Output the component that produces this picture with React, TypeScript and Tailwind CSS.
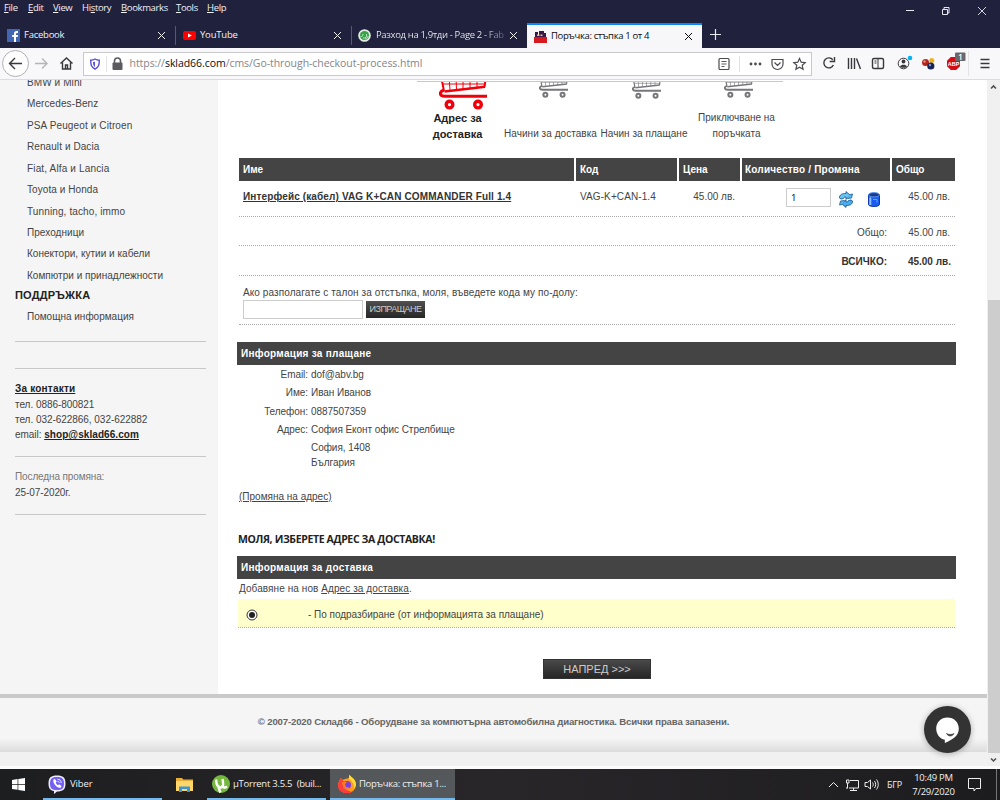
import type { ReactNode } from "react";

const sidebarLinks = [
  { label: "BMW и Mini", track: "tracking-[0.1px]" },
  { label: "Mercedes-Benz", track: "tracking-[0.1px]" },
  { label: "PSA Peugeot и Citroen", track: "tracking-[0.12px]" },
  { label: "Renault и Dacia", track: "tracking-[0.08px]" },
  { label: "Fiat, Alfa и Lancia", track: "tracking-[0.15px]" },
  { label: "Toyota и Honda", track: "tracking-[0.07px]" },
  { label: "Tunning, tacho, immo", track: "tracking-[0.12px]" },
  { label: "Преходници", track: "tracking-[0.05px]" },
  { label: "Конектори, кутии и кабели", track: "tracking-[0.02px]" },
  { label: "Компютри и принадлежности", track: "tracking-[0.02px]" },
];

const menuItems = [
  { first: "F", rest: "ile", width: "w-[24px]" },
  { first: "E", rest: "dit", width: "w-[25px]" },
  { first: "V", rest: "iew", width: "w-[29px]" },
  { first: "", rest: "History", width: "w-[39px]" },
  { first: "B", rest: "ookmarks", width: "w-[55px]" },
  { first: "T", rest: "ools", width: "w-[31px]" },
  { first: "H", rest: "elp", width: "w-[26px]" },
];

function Cross({ className }: { className: string }) {
  return (
    <svg className={className} viewBox="0 0 9 9" fill="none" stroke="currentColor">
      <path d="M1 1l7 7M8 1l-7 7" />
    </svg>
  );
}

function Cart({ className }: { className: string }) {
  return (
    <svg className={className} viewBox="0 0 48 48" fill="none" stroke="currentColor">
      <path d="M2 14L5 29M47 14L45.500 25" strokeWidth="2" />
      <path d="M46 24.800L5.500 29.500" strokeWidth="2.600" />
      <path d="M3 17H46M4 22H46M10 14l1 14M17 14l.5 14M24 14v13M31 14v13M38 14v12" strokeWidth="1" />
      <path d="M5 28C-.5 30 .5 34.300 6 34.300H48" strokeWidth="3" />
      <circle cx="10.500" cy="42.600" r="3.300" strokeWidth="3.400" />
      <circle cx="39" cy="42.600" r="3.300" strokeWidth="3.400" />
    </svg>
  );
}

function TitleBar() {
  return (
    <div className="flex h-[23px] shrink-0 items-start text-[9.5px] leading-[16px] text-[#f0f0f5]">
      <div className="flex pl-[4px] tracking-[-0.35px]">
        {menuItems.map((m) => (
          <span key={m.rest} className={m.width + " whitespace-nowrap"}>
            {m.first ? <span className="underline">{m.first}</span> : null}
            {m.first ? m.rest : (
              <>
                Hi<span className="underline">s</span>tory
              </>
            )}
          </span>
        ))}
      </div>
      <svg className="ml-auto mt-[5px] mr-[13px] h-[12px] w-[82px]" viewBox="0 0 82 12" fill="none" stroke="#e8e8f0">
        <path d="M1 5.5h8" />
        <path d="M37.500 4.500h5v5h-5zM39 4V2.500h5v5.500h-1.500" />
        <path d="M73 2l8 8M81 2l-8 8" strokeWidth="0.900" />
      </svg>
    </div>
  );
}

function Tabs() {
  return (
    <div className="flex h-[25px] shrink-0 items-stretch text-[9.5px] text-[#f3f3f7]">
      <div className="flex w-[175px] items-center pl-[7px]">
        <svg className="h-[13px] w-[13px] shrink-0" viewBox="0 0 13 13">
          <rect width="13" height="13" fill="#4267b2" />
          <path d="M7 13V8H5.200V6H7V4.500C7 2.900 8 2 9.500 2H11V4H10C9.300 4 9 4.300 9 4.900V6h2l-.3 2H9v5z" fill="#fff" />
        </svg>
        <span className="ml-[4px] tracking-[-0.25px]">Facebook</span>
        <Cross className="ml-auto mr-[9px] h-[9px] w-[9px]" />
      </div>
      <div className="my-[3px] w-px bg-[#56577a]" />
      <div className="flex w-[175px] items-center pl-[7px]">
        <svg className="h-[9px] w-[13px] shrink-0" viewBox="0 0 13 9">
          <rect width="13" height="9" rx="2" fill="#f00" />
          <path d="M5 2.500l4 2-4 2z" fill="#fff" />
        </svg>
        <span className="ml-[4px] tracking-[-0.2px]">YouTube</span>
        <Cross className="ml-auto mr-[9px] h-[9px] w-[9px]" />
      </div>
      <div className="my-[3px] w-px bg-[#56577a]" />
      <div className="flex w-[175px] items-center pl-[6px]">
        <svg className="h-[13px] w-[13px] shrink-0" viewBox="0 0 13 13">
          <circle cx="6.500" cy="6.500" r="6.300" fill="#e6ece6" />
          <circle cx="6.500" cy="6.500" r="4.600" fill="#37a447" />
          <path d="M2.500 7.500C4 8 5 7 5 5M5 9c3 .5 4-1 3.500-4M7 10c2-.5 3-1.500 3.200-3" stroke="#dcefdc" strokeWidth="0.800" fill="none" />
        </svg>
        <span className="ml-[5px] w-[129px] bg-linear-to-r from-[#f3f3f7] from-82% to-[#55567a] bg-clip-text tracking-[-0.35px] whitespace-nowrap text-transparent">
          Разход на 1,9тди - Page 2 - Fab
        </span>
        <Cross className="ml-[4px] mr-[9px] h-[9px] w-[9px] shrink-0" />
      </div>
      <div className="flex w-[175px] items-center border-t-2 border-[#0a84ff] bg-[#f7f7fa] pl-[7px] text-[#0c0c0d]">
        <svg className="h-[13px] w-[13px] shrink-0" viewBox="0 0 13 13">
          <path d="M1 2h3v3h1V1h5v2h2v4H1z" fill="#3c1747" />
          <path d="M0 7h13v6H0z" fill="#d71920" />
          <path d="M3 4.500h2.500v1.500H3zM6.500 4.500h2v1.500h-2z" fill="#dcd36b" />
        </svg>
        <span className="ml-[4px] tracking-[-0.36px] whitespace-nowrap">Поръчка: стъпка 1 от 4</span>
        <Cross className="ml-auto mr-[9px] h-[9px] w-[9px]" />
      </div>
      <svg className="ml-[8px] mt-[6px] h-[11px] w-[11px]" viewBox="0 0 11 11" stroke="#e8e8f0" strokeWidth="1.200">
        <path d="M5.500 0v11M0 5.500h11" />
      </svg>
    </div>
  );
}

function Toolbar() {
  return (
    <div className="flex h-[32px] shrink-0 items-center border-b border-[#dcdcde] bg-[#f8f8fa]">
      <svg className="h-[31px] w-[82px] shrink-0" viewBox="0 0 82 31" fill="none" stroke="#38383d" strokeWidth="1.400">
        <circle cx="15.500" cy="15.500" r="13" fill="#fdfdfe" stroke="#b1b1b3" strokeWidth="1" />
        <path d="M22 15.500H10M15 10l-5.500 5.500L15 21" />
        <path d="M35 15.500h12M42 10.500l5 5-5 5" stroke="#b5b5b8" />
        <path d="M60.500 15.500l6-5.500 6 5.500M62.500 14.500v6.500h8v-6.500M65.500 21v-4h2v4" />
      </svg>
      <div className="ml-[0.500px] flex h-[24px] w-[729px] shrink-0 items-center border border-[#c9c9cc] bg-white">
        <svg className="h-[22px] w-[44px] shrink-0" viewBox="0 0 44 22" fill="none">
          <path d="M11 6c-1.500 1-2.700 1.200-4.300 1.200 0 5 .7 7 4.300 9 3.600-2 4.300-4 4.300-9C13.700 7.200 12.500 7 11 6z" stroke="#5a4fdb" strokeWidth="1.400" />
          <path d="M11 8.500v5.500c-1.500-1-2-2.400-2-5 .8 0 1.300-.1 2-.5z" fill="#5a4fdb" />
          <path d="M22.500 3v16" stroke="#e3e3e6" />
          <rect x="28.500" y="9.500" width="10" height="7.500" rx="1" fill="#5b5b5f" />
          <path d="M30.500 10V8a3 3 0 0 1 6 0v2" stroke="#5b5b5f" strokeWidth="1.600" />
        </svg>
        <span className="ml-[2px] text-[10.500px] tracking-[-0.05px] whitespace-nowrap text-[#85858a]">
          https://<span className="text-[#0c0c0d]">sklad66.com</span>/cms/Go-through-checkout-process.html
        </span>
        <svg className="ml-auto h-[22px] w-[94px] shrink-0" viewBox="0 0 94 22" fill="none" stroke="#4a4a4f" strokeWidth="1.200">
          <rect x="2" y="5.500" width="10" height="11" rx="1" />
          <path d="M4.500 8.500h5M4.500 11h5M4.500 13.500h3" strokeWidth="0.900" />
          <path d="M22.500 3v16" stroke="#e3e3e6" />
          <g fill="#4a4a4f" stroke="none">
            <circle cx="34" cy="11" r="1.400" />
            <circle cx="38.500" cy="11" r="1.400" />
            <circle cx="43" cy="11" r="1.400" />
          </g>
          <path d="M55 6.500h11v4.500a5.500 5.500 0 0 1-11 0zM57.500 9.500l3 3 3-3" />
          <path d="M82.500 5.500l1.700 3.700 4 .4-3 2.700.9 4-3.600-2.100-3.600 2.100.9-4-3-2.700 4-.4z" />
        </svg>
      </div>
      <svg className="h-[31px] w-[188px] shrink-0" viewBox="0 0 188 31" fill="none" stroke="#38383d" strokeWidth="1.400">
        <path d="M20.800 11.800a5 5 0 1 0 .6 5.200M22.500 9v4.500h-4.800" />
        <path d="M36.500 10v11M39.500 10v11M42.500 10v11M44.500 10.500l4 10.500" />
        <rect x="60.500" y="10.500" width="11" height="10" rx="1.500" />
        <path d="M66 10.500v10M62.500 13h2M62.500 15h2" strokeWidth="1" />
        <circle cx="91.500" cy="15.500" r="5.300" strokeWidth="1" />
        <circle cx="91.500" cy="13.500" r="1.900" fill="#38383d" stroke="none" />
        <path d="M88 18.500c1-2.500 6-2.500 7 0l-1.500 1.300h-4z" fill="#38383d" stroke="none" />
        <circle cx="98" cy="10" r="2.300" fill="#00b3f4" stroke="none" />
        <g stroke="none">
          <circle cx="113.500" cy="14.500" r="3.500" fill="#b3261c" />
          <circle cx="119.800" cy="12.500" r="2.500" fill="#e8b423" />
          <circle cx="118.800" cy="18" r="3.600" fill="#172554" />
          <circle cx="112.500" cy="13.500" r="1.200" fill="#e98d85" />
          <circle cx="118" cy="17" r="1.200" fill="#7d91d8" />
          <path d="M138.800 9h5.400l3.800 3.800v5.400l-3.800 3.800h-5.400l-3.800-3.800v-5.400z" fill="#d40d12" />
          <rect x="143" y="4.500" width="10.500" height="8.500" rx="1" fill="#69696d" />
          <text x="135.800" y="17.800" fontSize="5.500" fontWeight="700" fill="#fff" fontFamily="Liberation Sans">ABP</text>
          <text x="146" y="11.800" fontSize="8.500" fontWeight="600" fill="#fff" fontFamily="Open Sans">1</text>
        </g>
        <path d="M156.500 3v25" stroke="#e3e3e6" strokeWidth="1" />
        <path d="M168.500 11.500h9M168.500 15.500h9M168.500 19.500h9" />
      </svg>
    </div>
  );
}

function Sidebar() {
  return (
    <aside className="flex w-[218px] shrink-0 flex-col overflow-hidden bg-[#f5f5f5] pl-[15px] text-[#444]">
      <ul className="mt-[-8px] pl-[12px]">
        {sidebarLinks.map((l) => (
          <li key={l.label} className={l.track + " h-[21.430px] leading-[21px] whitespace-nowrap"}>
            {l.label}
          </li>
        ))}
      </ul>
      <div className="h-[20px] text-[11px] leading-[19px] font-bold tracking-[0.2px] text-[#222]">ПОДДРЪЖКА</div>
      <div className="h-[21px] pl-[12px] leading-[21px]">Помощна информация</div>
      <div className="mt-[14px] h-[28px] w-[191px] border-y border-[#c8c8c8]" />
      <div className="mt-[12px] leading-[15.300px] tracking-[-0.04px]">
        <div className="font-bold tracking-[0.2px] text-[#222] underline">За контакти</div>
        <div>тел. 0886-800821</div>
        <div>тел. 032-622866, 032-622882</div>
        <div>
          email: <span className="font-bold tracking-[0.07px] text-[#222] underline">shop@sklad66.com</span>
        </div>
      </div>
      <div className="mt-[14px] flex h-[59px] w-[191px] flex-col border-y border-[#c8c8c8] pt-[12px] leading-[15.500px]">
        <div className="tracking-[-0.12px] text-[#777]">Последна промяна:</div>
        <div className="tracking-[-0.08px]">25-07-2020г.</div>
      </div>
    </aside>
  );
}

function Steps() {
  return (
    <div className="ml-[199px] flex h-[62px] w-[366px] border-t border-[#c8c8c8] leading-[15.500px] whitespace-nowrap">
      <div className="flex w-[81px] shrink-0 flex-col items-center text-center">
        <div className="flex h-[28px] w-[59px] items-end justify-end overflow-hidden">
          <Cart className="h-[48px] w-[48px] shrink-0 text-[#f0000a]" />
        </div>
        <div className="mt-[1px] text-[11px] font-bold text-[#222]">
          Адрес за
          <br />
          доставка
        </div>
      </div>
      <div className="flex w-[105px] shrink-0 flex-col items-center">
        <div className="ml-[5px] flex h-[16px] items-end overflow-hidden">
          <Cart className="h-[29px] w-[29px] shrink-0 text-[#77777a]" />
        </div>
        <div className="mt-[28px] tracking-[0.05px]">Начини за доставка</div>
      </div>
      <div className="flex w-[82px] shrink-0 flex-col items-center">
        <div className="ml-[4px] flex h-[17px] items-end overflow-hidden">
          <Cart className="h-[29px] w-[29px] shrink-0 text-[#77777a]" />
        </div>
        <div className="mt-[27px] tracking-[0.05px]">Начин за плащане</div>
      </div>
      <div className="flex w-[98px] shrink-0 flex-col items-center pl-[5px] text-center">
        <div className="ml-[3px] flex h-[16px] items-end overflow-hidden">
          <Cart className="h-[29px] w-[29px] shrink-0 text-[#77777a]" />
        </div>
        <div className="mt-[12px]">
          Приключване на
          <br />
          поръчката
        </div>
      </div>
    </div>
  );
}

const columns = "grid grid-cols-[335px_101px_61px_148px_63px] gap-x-[2px]";
const dots = "border-b border-dotted border-[#aaa]";

function OrderTable() {
  return (
    <div className="ml-[21px] w-[716px]">
      <div className={columns + " h-[23px] leading-[23px] font-bold text-white"}>
        <div className="bg-[#444] pl-[4px]">Име</div>
        <div className="bg-[#444] pl-[4px]">Код</div>
        <div className="bg-[#444] pl-[4px]">Цена</div>
        <div className="bg-[#444] pl-[3px] tracking-[0.2px]">Количество / Промяна</div>
        <div className="bg-[#444] pl-[4px]">Общо</div>
      </div>
      <div className={columns + " h-[36px] leading-[31px]"}>
        <div className={dots + " pl-[4px] font-bold tracking-[0.130px] text-[#333] underline"}>Интерфейс (кабел) VAG K+CAN COMMANDER Full 1.4</div>
        <div className={dots + " pl-[4px] tracking-[0.1px]"}>VAG-K+CAN-1.4</div>
        <div className={dots + " pr-[5px] text-right"}>45.00 лв.</div>
        <div className={dots + " flex pt-[7px] pl-[44px]"}>
          <div className="h-[19px] w-[45px] border border-[#ccc] bg-white pl-[4px] font-['Open_Sans',sans-serif] text-[9.500px] leading-[18px] text-black">1</div>
          <svg className="ml-[7px] mt-[3px] h-[17px] w-[16px]" viewBox="0 0 16 17">
            <path d="M1.500 7C1.500 3.500 4 2.500 8 2.500V.6l4.500 3.900L8 8.200V6C6 6 5.500 6.500 5.500 7.500L3 8z" fill="#6cc4f3" stroke="#155a99" strokeWidth="0.900" />
            <path d="M14.500 10c0 3.500-2.500 4.500-6.500 4.500v1.900L3.500 12.500 8 8.800V11c2 0 2.500-.5 2.500-1.500L13 9z" fill="#4aaef0" stroke="#155a99" strokeWidth="0.900" />
            <path d="M12 3.500l2.500-.5-1 4-4 .5M4 13.500L1.500 14l1-4 4-.5" fill="#58b9ef" stroke="#155a99" strokeWidth="0.800" />
          </svg>
          <svg className="ml-[14px] mt-[4px] h-[15px] w-[12px]" viewBox="0 0 12 15">
            <path d="M.5 3v9.500c0 2.600 11 2.600 11 0V3z" fill="#1a5cf0" stroke="#1037ac" />
            <path d="M2.300 5.500v7.500" stroke="#8cc0ff" strokeWidth="2" />
            <ellipse cx="6" cy="2.800" rx="5.500" ry="2.200" fill="#1e3a8a" stroke="#5598f5" />
            <path d="M5 7.500h4v3" fill="none" stroke="#54a8ff" />
          </svg>
        </div>
        <div className={dots + " pr-[5px] text-right"}>45.00 лв.</div>
      </div>
      <div className="grid h-[29px] grid-cols-[651px_63px] grid-rows-[29px] gap-x-[2px] text-right leading-[31px]">
        <div className={dots + " pr-[3px]"}>Общо:</div>
        <div className={dots + " pr-[5px]"}>45.00 лв.</div>
      </div>
      <div className="grid h-[30px] grid-cols-[651px_63px] grid-rows-[30px] gap-x-[2px] text-right leading-[32px] font-bold text-[#333]">
        <div className={dots + " pr-[3px]"}>ВСИЧКО:</div>
        <div className={dots + " pr-[4px]"}>45.00 лв.</div>
      </div>
      <div className={dots + " h-[49px] pt-[9px] pl-[4px]"}>
        <div className="h-[15px] leading-[16px] tracking-[0.090px]">Ако разполагате с талон за отстъпка, моля, въведете кода му по-долу:</div>
        <div className="flex items-center">
          <div className="h-[19px] w-[120px] border border-[#ccc] bg-white" />
          <div className="ml-[3px] h-[17px] w-[59px] bg-linear-to-b from-[#505050] to-[#262626] text-center text-[9px] leading-[17px] tracking-[-0.55px] text-[#ccc]">
            ИЗПРАЩАНЕ
          </div>
        </div>
      </div>
    </div>
  );
}

function SectionBar({ children }: { children: ReactNode }) {
  return <div className="ml-[19px] h-[23px] w-[719px] bg-[#444] pl-[4px] leading-[23px] font-bold tracking-[0.280px] text-white">{children}</div>;
}

function InfoRow({ label, value }: { label: string; value: string }) {
  return (
    <div className="flex h-[18.300px] leading-[18px]">
      <div className="w-[90px] shrink-0 text-right tracking-[-0.05px]">{label}</div>
      <div className="pl-[3px] tracking-[-0.05px]">{value}</div>
    </div>
  );
}

function Checkout() {
  return (
    <main className="flex min-w-0 flex-1 flex-col overflow-hidden bg-white pt-[1px] text-[#444]">
      <Steps />
      <div className="mt-[15px]">
        <OrderTable />
      </div>
      <div className="mt-[17px]">
        <SectionBar>Информация за плащане</SectionBar>
      </div>
      <div className="h-[105px] pt-[1px]">
        <InfoRow label="Email:" value="dof@abv.bg" />
        <InfoRow label="Име:" value="Иван Иванов" />
        <InfoRow label="Телефон:" value="0887507359" />
        <InfoRow label="Адрес:" value="София Еконт офис Стрелбище" />
        <InfoRow label="" value="София, 1408" />
        <div className="mt-[-3px]">
          <InfoRow label="" value="България" />
        </div>
      </div>
      <div className="mt-[18px] h-[18px] pl-[21px] leading-[18px]">
        <span className="underline">(Промяна на адрес)</span>
      </div>
      <div className="mt-[24px] h-[18px] pl-[20px] font-['Open_Sans','Noto_Sans',sans-serif] text-[10.500px] leading-[18px] font-bold tracking-[-0.360px] text-[#222]">
        МОЛЯ, ИЗБЕРЕТЕ АДРЕС ЗА ДОСТАВКА!
      </div>
      <div className="mt-[8px]">
        <SectionBar>Информация за доставка</SectionBar>
      </div>
      <div className="h-[20px] pl-[21px] leading-[20px] tracking-[0.080px]">
        Добавяне на нов <span className="underline">Адрес за доставка</span>.
      </div>
      <div className={dots + " ml-[20px] flex h-[29px] w-[717px] items-center bg-[#ffffcc]"}>
        <svg className="ml-[8px] mt-[3px] h-[12px] w-[12px]" viewBox="0 0 12 12">
          <circle cx="6" cy="6" r="5" fill="#fff" stroke="#333" />
          <circle cx="6" cy="6" r="3" fill="#222" />
        </svg>
        <span className="mt-[2px] ml-[50px] tracking-[-0.02px]">- По подразбиране (от информацията за плащане)</span>
      </div>
      <div className="mt-[31px] ml-[325px] h-[20px] w-[108px] border border-[#333] bg-linear-to-b from-[#4a4a4a] to-[#262626] text-center text-[11px] leading-[19px] text-[#ccc]">
        НАПРЕД &gt;&gt;&gt;
      </div>
    </main>
  );
}

function Footer() {
  return (
    <footer className="h-[72px] shrink-0 bg-[#f1f1f1]">
      <div className="h-[58px] border-t-4 border-[#c9c9c9] bg-linear-to-b from-[#f5f5f5] from-75% to-[#dcdcdc] text-center leading-[47px] font-bold text-[#666]">
        <span className="text-[9.600px] tracking-[-0.165px]">© 2007-2020 Склад66 - Оборудване за компютърна автомобилна диагностика. Всички права запазени.</span>
      </div>
    </footer>
  );
}

function Scrollbar() {
  return (
    <div className="flex w-[13px] shrink-0 flex-col items-center bg-[#f0f0f0]">
      <svg className="h-[13px] w-[11px]" viewBox="0 0 11 13" fill="none" stroke="#505050" strokeWidth="1.600">
        <path d="M3 8.500l2.500-2.500L8 8.500" />
      </svg>
      <div className="mt-[207px] h-[455px] w-[12px] bg-[#cdcdcd]" />
      <svg className="h-[13px] w-[11px]" viewBox="0 0 11 13" fill="none" stroke="#505050" strokeWidth="1.600">
        <path d="M3 5.500L5.500 8 8 5.500" />
      </svg>
    </div>
  );
}

function ChatButton() {
  return (
    <button className="absolute top-[626px] left-[924px] h-[47px] w-[47px] rounded-full bg-[#333] shadow-[0_1px_6px_rgba(0,0,0,0.3)]">
      <svg className="h-[47px] w-[47px]" viewBox="0 0 47 47">
        <path d="M23.500 11.500c6.500 0 11.300 4.900 11.300 11 0 7.500-6 11-14 14.500v-3.200c-5-1-8.600-5.600-8.600-11.300 0-6.100 4.800-11 11.300-11z" fill="#fff" />
        <path d="M22.500 27.500c2 1.300 5.500 1.300 7.500 0-1.500 3.300-6 3.300-7.500 0z" fill="#333" stroke="#333" strokeWidth="0.600" />
      </svg>
    </button>
  );
}

function Taskbar() {
  return (
    <div className="flex h-[31px] shrink-0 bg-linear-to-r from-[#1d1e20] via-[#29262a] to-[#1c1c1e] text-[9.500px] text-[#f0f0f0]">
      <div className="flex w-[43px] items-center pl-[12px]">
        <svg className="h-[13px] w-[13px]" viewBox="0 0 13 13" fill="#fff">
          <path d="M0 1.900L5.600 1.100v5H0zM6.300 1L13 0v6.100H6.300zM0 6.800h5.600v5L0 11.100zM6.300 6.800H13V13l-6.700-1z" />
        </svg>
      </div>
      <div className="flex w-[119px] items-center border-b-2 border-[#76b9ed] pt-[1px] pl-[5px]">
        <svg className="h-[19px] w-[18px]" viewBox="0 0 18 19">
          <path d="M9 .5c6 0 8.500 2 8.500 8s-2.500 8-8.500 8L6 19v-3C2 15.500.5 13 .5 8.500.5 2.500 3 .5 9 .5z" fill="#f1edff" />
          <path d="M9 2c5 0 7 1.500 7 6.500S14 15 9 15s-7-1.500-7-6.500S4 2 9 2z" fill="#7360f2" />
          <path d="M5.500 4.500l1.500-.5 1.700 2.500-1 1.200c.5 1.200 1.300 2 2.300 2.500l1.200-1 2.300 1.700-.5 1.500c-3 2-9-4.500-7.500-7.900z" fill="#fff" />
          <path d="M9.500 4.200c2.200 0 3.700 1.600 3.700 3.800M9.500 6.200c1 0 1.700.7 1.700 1.700" fill="none" stroke="#fff" strokeWidth="0.800" />
        </svg>
        <span className="ml-[4px] tracking-[-0.1px]">Viber</span>
      </div>
      <div className="flex w-[45px] items-center pl-[14px]">
        <svg className="h-[15px] w-[17px]" viewBox="0 0 17 15">
          <path d="M0 1h6l1.500 1.500H17V14H0z" fill="#e9ae3a" />
          <path d="M0 4h17v10H0z" fill="#ffd667" />
          <path d="M3 15V9.500h11V15h-3v-3H6v3z" fill="#3e96d1" />
        </svg>
      </div>
      <div className="flex w-[119px] items-center border-b-2 border-[#76b9ed] pt-[1px] pl-[5px]">
        <svg className="h-[18px] w-[18px] shrink-0" viewBox="0 0 18 18">
          <circle cx="9" cy="9" r="9" fill="#76b83f" />
          <path d="M4 4.500C4.500 9 5 13 9 12.500c2.500-.3 2.500-3 1.500-8.500M10 10c1 3 3 3.200 5 1.500M6 10c1 3 1 5 2.500 7.500" stroke="#fff" strokeWidth="2.400" fill="none" />
        </svg>
        <span className="ml-[3px] tracking-[-0.26px] whitespace-pre">µTorrent 3.5.5  (buil...</span>
      </div>
      <div className="ml-[4px] flex w-[125px] items-center border-b-2 border-[#76b9ed] bg-[#55585a] pt-[1px] pl-[8px]">
        <svg className="h-[18px] w-[18px] shrink-0" viewBox="0 0 18 18">
          <path d="M1 6l2-3 1 2 3-1 4-1V0c4 3 7 5 7 10a9 8 0 0 1-18 0z" fill="#ff9a1f" />
          <path d="M1 6l2-3 1 2 3 2-2 6 6 3 3 1A9 8 0 0 1 0 10z" fill="#ff3d3d" />
          <path d="M11 0c4 3 7 5 7 10l-2 4c0-5-1-7-5-10z" fill="#ffda3b" />
          <circle cx="9" cy="10" r="4" fill="#7b40d8" />
          <path d="M4 7h5l-2 2 1 3 5 1c-4 3-9 0-9-6z" fill="#ff7a29" />
        </svg>
        <span className="ml-[3px] tracking-[-0.3px] whitespace-nowrap">Поръчка: стъпка 1...</span>
      </div>
      <svg className="ml-auto h-[31px] w-[52px] shrink-0" viewBox="0 0 52 31" fill="none" stroke="#eee" strokeWidth="1">
        <path d="M2 18l4.500-4.500L11 18" />
        <path d="M23 11.500h8.500v7.500H22M19 19h2M26.500 19v2.500M23 21.500h7M19.500 11h2.500v3h-2.500zM20.500 14v5" />
        <path d="M38 13.500h2.500l3-2.500v9l-3-2.500H38zM45.500 13.500c1 1.200 1 2.800 0 4M47.500 12c1.600 2 1.600 5 0 7M49.500 10.500c2.300 2.800 2.300 7.200 0 10" />
      </svg>
      <span className="ml-[8px] w-[17px] text-[9px] leading-[31px] tracking-[-0.2px]">БГР</span>
      <div className="ml-[6px] w-[47px] pt-[2px] text-center text-[9.500px] leading-[13.500px] tracking-[-0.300px] whitespace-nowrap">
        10:49 PM
        <br />
        7/29/2020
      </div>
      <svg className="ml-[9px] h-[31px] w-[34px] shrink-0" viewBox="0 0 34 31" fill="none" stroke="#eee">
        <path d="M2.500 9.500h12v10H10l-2 2.500v-2.500H2.500z" />
        <path d="M30.500 0v31" stroke="#77777b" />
      </svg>
    </div>
  );
}

export default function App() {
  return (
    <div className="flex h-[800px] w-[1000px] flex-col overflow-hidden bg-[#20213d] font-['Open_Sans','Noto_Sans',sans-serif]">
      <TitleBar />
      <Tabs />
      <Toolbar />
      <div className="relative flex h-[689px] shrink-0 border-b-3 border-[#fcfcfc] font-['Liberation_Sans',Arial,sans-serif] text-[10px]">
        <div className="flex min-w-0 flex-1 flex-col">
          <div className="flex min-h-0 flex-1">
            <Sidebar />
            <Checkout />
          </div>
          <Footer />
        </div>
        <Scrollbar />
        <ChatButton />
      </div>
      <Taskbar />
    </div>
  );
}
